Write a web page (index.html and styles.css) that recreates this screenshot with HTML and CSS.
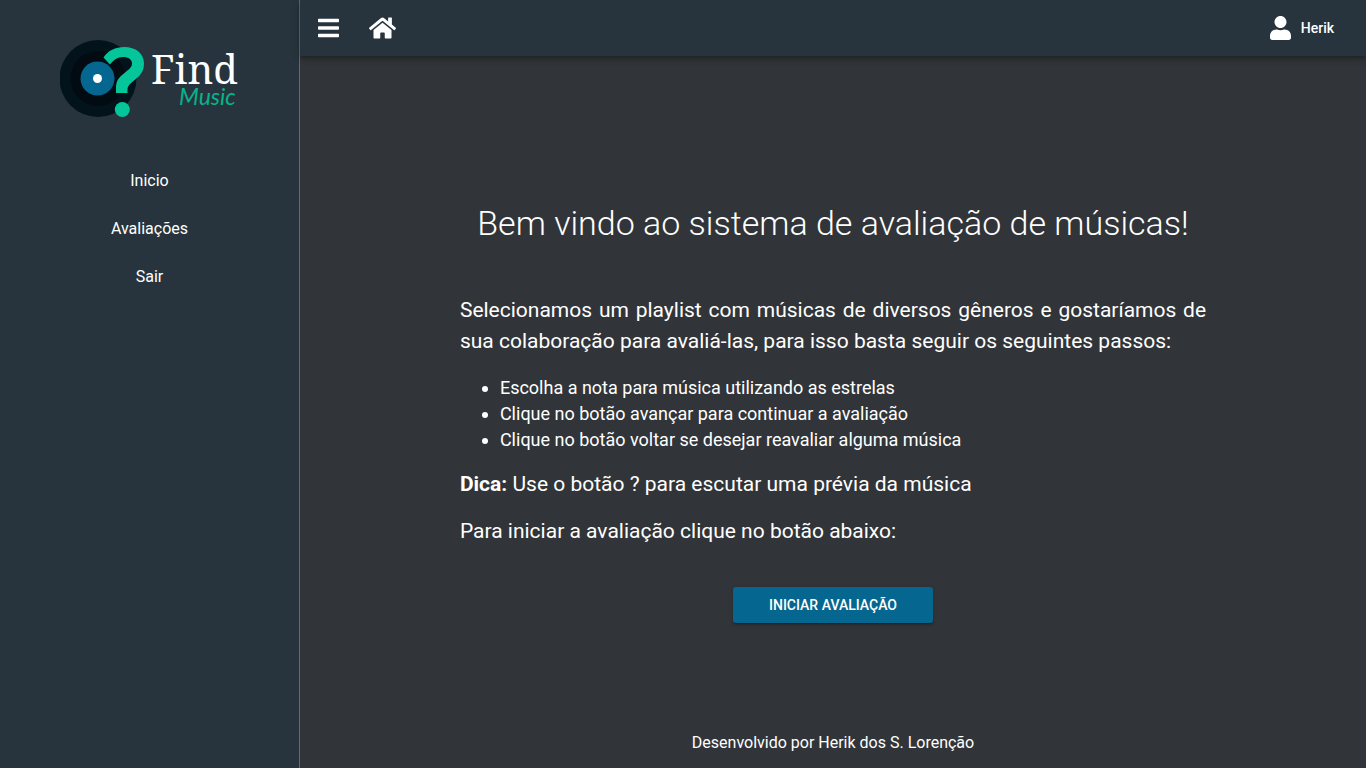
FILE: index.html
```html
<!DOCTYPE html>
<html lang="pt-BR">
<head>
<meta charset="utf-8">
<meta name="viewport" content="width=device-width, initial-scale=1">
<title>Find Music</title>
<link rel="stylesheet" href="styles.css">
</head>
<body>
<div class="app">
  <aside class="sidebar">
    <svg class="logo" viewBox="0 0 180 78" role="img" aria-label="Find Music">
      <circle cx="38" cy="38.500" r="38.500" fill="#02131b"/>
      <circle cx="38" cy="38.500" r="27.500" fill="#010b11"/>
      <circle cx="37.500" cy="38.500" r="17" fill="#05668f"/>
      <circle cx="37.500" cy="38.500" r="4.500" fill="#fff"/>
      <path d="M43.500 17.500C48 10.500 55.500 7 64 7c12 0 20 6.500 20 16.500 0 8-4 12.500-10 17-5 4-6.500 6-6.500 9.500v3H56v-5c0-7 2.500-10.500 8.500-15 5-4 7.500-6 7.500-9.500 0-4-3.500-6.500-9-6.500-5.500 0-9.500 3-13 7.500z" fill="#05c59b"/>
      <circle cx="62.300" cy="69.500" r="7.500" fill="#05c59b"/>
      <text class="logo-title" x="91" y="44">Find</text>
      <text class="logo-subtitle" x="119" y="65">Music</text>
    </svg>
    <nav class="menu">
      <a class="menu-link" href="#inicio">Inicio</a>
      <a class="menu-link" href="#avaliacoes">Avaliações</a>
      <a class="menu-link" href="#sair">Sair</a>
    </nav>
  </aside>
  <div class="page">
    <header class="topbar">
      <button class="icon-button" type="button" aria-label="Menu">
        <svg class="icon" viewBox="0 0 448 512"><path d="M16 132h416c8.837 0 16-7.163 16-16V76c0-8.837-7.163-16-16-16H16C7.163 60 0 67.163 0 76v40c0 8.837 7.163 16 16 16zm0 160h416c8.837 0 16-7.163 16-16v-40c0-8.837-7.163-16-16-16H16c-8.837 0-16 7.163-16 16v40c0 8.837 7.163 16 16 16zm0 160h416c8.837 0 16-7.163 16-16v-40c0-8.837-7.163-16-16-16H16c-8.837 0-16 7.163-16 16v40c0 8.837 7.163 16 16 16z"/></svg>
      </button>
      <a class="icon-button" href="#inicio" aria-label="Início">
        <svg class="icon" viewBox="0 0 576 512"><path d="M280.370 148.260L96 300.110V464a16 16 0 0 0 16 16l112.060-.290a16 16 0 0 0 15.920-16V368a16 16 0 0 1 16-16h64a16 16 0 0 1 16 16v95.640a16 16 0 0 0 16 16.050L464 480a16 16 0 0 0 16-16V300L295.670 148.260a12.190 12.190 0 0 0-15.300 0zM571.600 251.470L488 182.560V44.050a12 12 0 0 0-12-12h-56a12 12 0 0 0-12 12v72.610L318.470 43a48 48 0 0 0-61 0L4.340 251.470a12 12 0 0 0-1.600 16.900l25.500 31A12 12 0 0 0 45.150 301l235.220-193.740a12.190 12.190 0 0 1 15.300 0L530.900 301a12 12 0 0 0 16.900-1.600l25.500-31a12 12 0 0 0-1.700-16.930z"/></svg>
      </a>
      <button class="user" type="button">
        <svg class="icon" viewBox="0 0 448 512" aria-hidden="true"><path d="M224 256c70.700 0 128-57.300 128-128S294.700 0 224 0 96 57.300 96 128s57.300 128 128 128zm89.600 32h-16.700c-22.200 10.200-46.900 16-72.900 16s-50.600-5.800-72.900-16h-16.700C60.200 288 0 348.200 0 422.400V464c0 26.500 21.500 48 48 48h352c26.500 0 48-21.500 48-48v-41.600c0-74.200-60.200-134.400-134.400-134.400z"/></svg>
        <span>Herik</span>
      </button>
    </header>
    <main class="content">
      <h1 class="title">Bem vindo ao sistema de avaliação de músicas!</h1>
      <p class="text">Selecionamos um playlist com músicas de diversos gêneros e gostaríamos de sua colaboração para avaliá-las, para isso basta seguir os seguintes passos:</p>
      <ul class="steps">
        <li>Escolha a nota para música utilizando as estrelas</li>
        <li>Clique no botão avançar para continuar a avaliação</li>
        <li>Clique no botão voltar se desejar reavaliar alguma música</li>
      </ul>
      <p class="text"><strong>Dica:</strong> Use o botão ? para escutar uma prévia da música</p>
      <p class="text">Para iniciar a avaliação clique no botão abaixo:</p>
      <button class="start" type="button">INICIAR AVALIAÇÃO</button>
    </main>
    <footer class="footer">Desenvolvido por Herik dos S. Lorenção</footer>
  </div>
</div>
</body>
</html>
```
FILE: styles.css
```css
* {
  box-sizing: border-box;
}

body {
  margin: 0;
  background: #313539;
  color: #fff;
  font: 16px/24px Roboto, sans-serif;
}

button {
  border: 0;
  background: none;
  color: inherit;
  font: inherit;
  cursor: pointer;
}

.app {
  display: flex;
  min-height: 100vh;
}

.sidebar {
  display: flex;
  flex: none;
  flex-direction: column;
  align-items: center;
  width: 300px;
  padding-top: 40px;
  border-right: 1px solid #66696c;
  background: #28343d;
}

.logo {
  width: 180px;
  height: 78px;
}

.logo-title {
  fill: #fff;
  font: 40px "Noto Serif", "Droid Serif", "DejaVu Serif", serif;
}

.logo-subtitle {
  fill: #05b48c;
  font: italic 23px "Segoe Print", "Bradley Hand", Lato, cursive;
}

.menu {
  display: flex;
  flex-direction: column;
  align-self: stretch;
  margin-top: 39px;
}

.menu-link {
  padding: 12px 16px;
  color: inherit;
  text-align: center;
  text-decoration: none;
}

.page {
  display: flex;
  flex: 1;
  flex-direction: column;
  min-width: 0;
}

.topbar {
  display: flex;
  align-items: center;
  height: 56px;
  padding: 0 24px 0 16px;
  background: #28343d;
  box-shadow: 0 2px 4px -1px rgba(0, 0, 0, .2), 0 4px 5px rgba(0, 0, 0, .14), 0 1px 10px rgba(0, 0, 0, .12);
}

.icon {
  display: block;
  height: 24px;
  fill: currentColor;
}

.icon-button {
  display: block;
  margin-right: 26px;
  padding: 0 2px;
  color: inherit;
}

.user {
  display: flex;
  align-items: center;
  gap: 10px;
  margin-left: auto;
  padding: 0 8px;
  font-size: 14px;
  font-weight: 500;
}

.content {
  display: flex;
  flex: 1;
  flex-direction: column;
  justify-content: center;
  width: 70%;
  margin: 0 auto;
  padding-top: 50px;
}

.title {
  margin: 0 0 50px;
  font-size: 34px;
  font-weight: 300;
  line-height: 44px;
  text-align: center;
}

.text {
  margin: 0 0 16px;
  font-size: 21px;
  line-height: 31px;
  text-align: justify;
}

.steps {
  margin: 2px 0 16px;
  padding-left: 40px;
  font-size: 18px;
  line-height: 26px;
}

.start {
  align-self: center;
  width: 200px;
  height: 36px;
  margin-top: 24px;
  border-radius: 3px;
  background: #05668f;
  box-shadow: 0 3px 1px -2px rgba(0, 0, 0, .2), 0 2px 2px rgba(0, 0, 0, .14), 0 1px 5px rgba(0, 0, 0, .12);
  font-size: 14px;
  font-weight: 500;
}

.footer {
  padding: 14px 16px 13px;
  text-align: center;
}
```
